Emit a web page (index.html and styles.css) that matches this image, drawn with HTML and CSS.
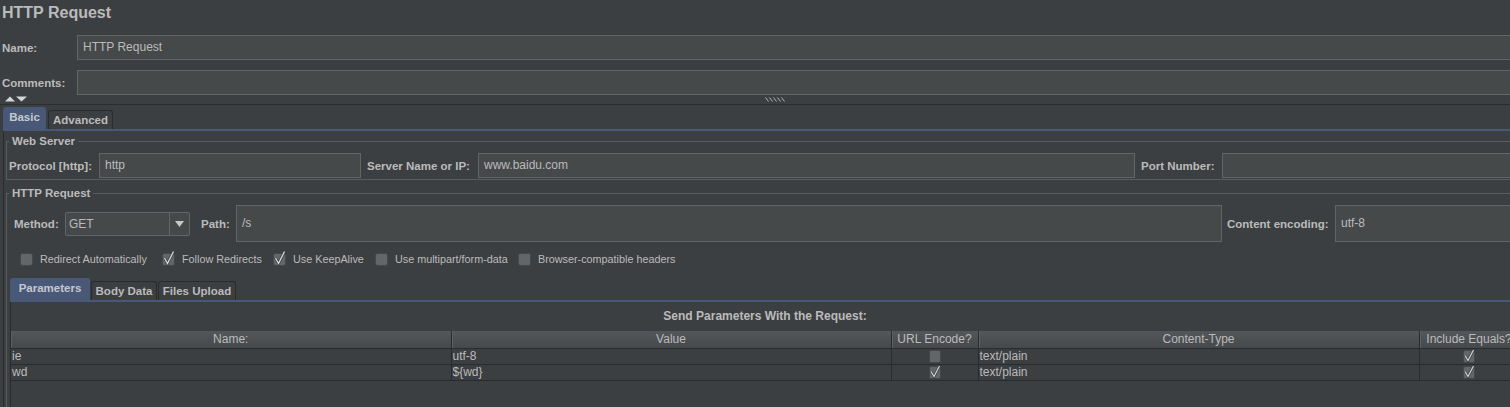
FILE: index.html
```html
<!DOCTYPE html>
<html>
<head>
<meta charset="utf-8">
<title>HTTP Request</title>
<link rel="stylesheet" href="styles.css">
</head>
<body>
<div class="page">
  <div class="title">HTTP Request</div>
  <div class="meta">
    <span class="lbl">Name:</span><div class="field">HTTP Request</div>
    <span class="lbl">Comments:</span><div class="field"></div>
  </div>
  <div class="splitter">
    <svg class="arrows" width="24" height="6" viewBox="0 0 24 6"><polygon points="0,5.5 5,0.5 10,5.5" fill="#d6d6d6"/><polygon points="11,0.5 22,0.5 16.5,5.5" fill="#d6d6d6"/></svg>
    <svg class="grip" width="20" height="5" viewBox="0 0 20 5"><g stroke="#b4b4b4" stroke-width="1" fill="none"><path d="M0.5 0.5 L3.5 4.5"/><path d="M4.5 0.5 L7.5 4.5"/><path d="M8.5 0.5 L11.5 4.5"/><path d="M12.5 0.5 L15.5 4.5"/><path d="M16.5 0.5 L19.5 4.5"/></g></svg>
  </div>
  <div class="tabbar outer">
    <div class="tab sel w-basic">Basic</div>
    <div class="tab w-adv">Advanced</div>
  </div>
  <div class="panel">
    <fieldset class="group ws">
      <legend>Web Server</legend>
      <div class="ws-row">
        <span class="lbl">Protocol [http]:</span>
        <div class="field">http</div>
        <span class="lbl pad6">Server Name or IP:</span>
        <div class="field">www.baidu.com</div>
        <span class="lbl pad6">Port Number:</span>
        <div class="field"></div>
      </div>
    </fieldset>
    <fieldset class="group hr">
      <legend>HTTP Request</legend>
      <div class="req-row">
        <span class="lbl pad5">Method:</span>
        <div class="combo"><span class="combo-val">GET</span><span class="combo-btn"><svg width="9" height="6" viewBox="0 0 9 6"><polygon points="0,0 9,0 4.5,6" fill="#c8c8c8"/></svg></span></div>
        <span class="lbl pad11">Path:</span>
        <div class="field tall">/s</div>
        <span class="lbl pad5">Content encoding:</span>
        <div class="field tall">utf-8</div>
      </div>
      <div class="checks">
        <div class="chk"><svg class="cb" width="13" height="13" viewBox="0 0 13 13"><rect x="0.5" y="0.5" width="12" height="12" rx="2" fill="#636668" stroke="#45484a"/></svg><span>Redirect Automatically</span></div>
        <div class="chk"><svg class="cb" width="13" height="13" viewBox="0 0 13 13"><rect x="0.5" y="0.5" width="12" height="12" rx="2" fill="#636668" stroke="#45484a"/><path d="M2.5 5 L5.5 10.5 L11.5 -1.5" fill="none" stroke="#2e3032" stroke-width="2.6"/><path d="M2.5 5 L5.5 10.5 L11.5 -1.5" fill="none" stroke="#d6d6d6" stroke-width="1.4"/></svg><span>Follow Redirects</span></div>
        <div class="chk"><svg class="cb" width="13" height="13" viewBox="0 0 13 13"><rect x="0.5" y="0.5" width="12" height="12" rx="2" fill="#636668" stroke="#45484a"/><path d="M2.5 5 L5.5 10.5 L11.5 -1.5" fill="none" stroke="#2e3032" stroke-width="2.6"/><path d="M2.5 5 L5.5 10.5 L11.5 -1.5" fill="none" stroke="#d6d6d6" stroke-width="1.4"/></svg><span>Use KeepAlive</span></div>
        <div class="chk"><svg class="cb" width="13" height="13" viewBox="0 0 13 13"><rect x="0.5" y="0.5" width="12" height="12" rx="2" fill="#636668" stroke="#45484a"/></svg><span>Use multipart/form-data</span></div>
        <div class="chk"><svg class="cb" width="13" height="13" viewBox="0 0 13 13"><rect x="0.5" y="0.5" width="12" height="12" rx="2" fill="#636668" stroke="#45484a"/></svg><span>Browser-compatible headers</span></div>
      </div>
      <div class="tabbar inner">
        <div class="tab sel w-params">Parameters</div>
        <div class="tab w-body">Body Data</div>
        <div class="tab w-files">Files Upload</div>
      </div>
      <div class="inner-panel">
        <div class="caption">Send Parameters With the Request:</div>
        <table class="params">
          <colgroup><col class="c-name"><col class="c-value"><col class="c-enc"><col class="c-type"><col class="c-eq"></colgroup>
          <thead>
            <tr><th>Name:</th><th>Value</th><th>URL Encode?</th><th>Content-Type</th><th>Include Equals?</th></tr>
          </thead>
          <tbody>
            <tr>
              <td>ie</td><td>utf-8</td>
              <td class="mid"><svg class="tcb" width="12" height="13" viewBox="0 0 12 13"><rect x="0.5" y="0.5" width="11" height="12" rx="1.5" fill="#636668" stroke="#45484a"/></svg></td>
              <td>text/plain</td>
              <td class="mid"><svg class="tcb" width="12" height="13" viewBox="0 0 12 13"><rect x="0.5" y="0.5" width="11" height="12" rx="1.5" fill="#636668" stroke="#45484a"/><path d="M2 5.5 L5 10.5 L10.5 0" fill="none" stroke="#2e3032" stroke-width="2.4"/><path d="M2 5.5 L5 10.5 L10.5 0" fill="none" stroke="#d6d6d6" stroke-width="1.3"/></svg></td>
            </tr>
            <tr>
              <td>wd</td><td>${wd}</td>
              <td class="mid"><svg class="tcb" width="12" height="13" viewBox="0 0 12 13"><rect x="0.5" y="0.5" width="11" height="12" rx="1.5" fill="#636668" stroke="#45484a"/><path d="M2 5.5 L5 10.5 L10.5 0" fill="none" stroke="#2e3032" stroke-width="2.4"/><path d="M2 5.5 L5 10.5 L10.5 0" fill="none" stroke="#d6d6d6" stroke-width="1.3"/></svg></td>
              <td>text/plain</td>
              <td class="mid"><svg class="tcb" width="12" height="13" viewBox="0 0 12 13"><rect x="0.5" y="0.5" width="11" height="12" rx="1.5" fill="#636668" stroke="#45484a"/><path d="M2 5.5 L5 10.5 L10.5 0" fill="none" stroke="#2e3032" stroke-width="2.4"/><path d="M2 5.5 L5 10.5 L10.5 0" fill="none" stroke="#d6d6d6" stroke-width="1.3"/></svg></td>
            </tr>
          </tbody>
        </table>
      </div>
    </fieldset>
  </div>
</div>
</body>
</html>
```

FILE: styles.css
```css
* { box-sizing: border-box; }
html, body { margin: 0; padding: 0; }
body {
  background: #3c3f41;
  color: #bbbbbb;
  font: 12px "Liberation Sans", Arial, sans-serif;
  width: 1510px;
  height: 407px;
  overflow: hidden;
}
.page { width: 1526px; }

.title {
  height: 35px;
  line-height: 26px;
  font-size: 16px;
  font-weight: bold;
  padding-left: 2px;
}

.lbl { font-weight: bold; font-size: 11.5px; white-space: nowrap; }
.pad5 { padding-left: 5px; }
.pad6 { padding-left: 6px; }
.pad11 { padding-left: 11px; }

.meta {
  display: grid;
  grid-template-columns: 77px 1fr;
  row-gap: 10px;
  align-items: center;
}
.meta .lbl { padding-left: 2px; }

.field {
  height: 25px;
  background: #45494a;
  border: 1px solid #646464;
  line-height: 23px;
  padding-left: 5px;
  white-space: nowrap;
  overflow: hidden;
}
.field.tall { height: 37px; line-height: 35px; }

.splitter {
  height: 10px;
  border-bottom: 1px solid #2b2d2f;
  display: flex;
  align-items: flex-start;
  padding-left: 5px;
  padding-top: 1px;
}
.arrows { display: block; }
.grip { display: block; margin-left: 736px; margin-top: 1px; }

.tabbar {
  display: flex;
  align-items: flex-end;
  height: 26px;
  border-bottom: 2px solid #4a5878;
  gap: 2px;
}
.tabbar.outer { margin-left: 3px; }
.tabbar.inner { margin-left: 1px; margin-top: 8px; gap: 1px; }

.tab {
  font-weight: bold;
  font-size: 11.5px;
  height: 19px;
  line-height: 18px;
  text-align: center;
  border: 1px solid #2b2b2b;
  border-bottom: none;
  border-radius: 3px 3px 0 0;
  background: #3c3f41;
  white-space: nowrap;
}
.tab.sel {
  height: 22px;
  line-height: 19px;
  background: #4a5878;
  border-color: #4a5878;
  color: #c4c8d0;
}
.w-basic { width: 43px; }
.w-adv { width: 65px; }
.w-params { width: 80px; }
.w-body { width: 66px; }
.w-files { width: 78px; }

.panel {
  margin-left: 3px;
  border-left: 1px solid #2b2b2b;
  padding-left: 2px;
  padding-top: 3px;
  height: 280px;
}

fieldset.group {
  margin: 0 4px 0 0;
  border: 1px solid #5a5d60;
  padding: 0 2px 1px 2px;
  min-width: 0;
}
fieldset.group.hr { margin-top: 6px; border-bottom: none; padding-bottom: 0; }
legend {
  font-weight: bold;
  font-size: 11.5px;
  padding: 0 3px;
  line-height: 14px;
}

.ws-row {
  display: grid;
  grid-template-columns: 90px 262px 117px 657px 87px 1fr;
  align-items: center;
  margin-top: 5px;
  height: 25px;
}

.req-row {
  display: grid;
  grid-template-columns: 56px 125px 46px 986px 113px 1fr;
  align-items: center;
  margin-top: 5px;
  height: 37px;
}

.combo {
  height: 24px;
  display: flex;
  border: 1px solid #646464;
  border-radius: 2px;
  background: #45494a;
}
.combo-val { flex: 1; line-height: 22px; padding-left: 3px; }
.combo-btn {
  width: 20px;
  border-left: 1px solid #646464;
  display: flex;
  align-items: center;
  justify-content: center;
}
.combo-btn svg { display: block; }

.checks {
  display: grid;
  grid-template-columns: 142px 111px 102px 143px auto;
  margin-top: 8px;
  height: 18px;
  padding-left: 11px;
  align-items: center;
  font-size: 10.8px;
}
.chk { display: flex; align-items: center; gap: 7px; white-space: nowrap; }
.cb, .tcb { display: block; overflow: visible; }

.inner-panel {
  margin-left: 1px;
  border-left: 1px solid #2b2b2b;
  height: 110px;
}
.caption {
  height: 29px;
  padding-top: 7px;
  line-height: 14px;
  text-align: center;
  font-weight: bold;
}

table.params {
  border-collapse: collapse;
  table-layout: fixed;
  width: 1508px;
}
.c-name { width: 440px; }
.c-value { width: 440px; }
.c-enc { width: 87px; }
.c-type { width: 441px; }
.c-eq { width: 100px; }

.params th {
  height: 17px;
  padding: 0;
  font-weight: normal;
  line-height: 16px;
  background: linear-gradient(#53575a, #45494b);
  border-right: 1px solid #2b2b2b;
  border-bottom: 1px solid #2b2b2b;
  box-shadow: inset 1px 0 0 #5c6063;
  white-space: nowrap;
  overflow: hidden;
  text-align: center;
}
.params td {
  height: 16px;
  padding: 0 0 0 1px;
  line-height: 15px;
  border-right: 1px solid #2b2b2b;
  border-bottom: 1px solid #2b2b2b;
  white-space: nowrap;
  overflow: hidden;
}
.params td.mid { padding: 0; }
.params td.mid .tcb { margin: 0 auto; }
```
